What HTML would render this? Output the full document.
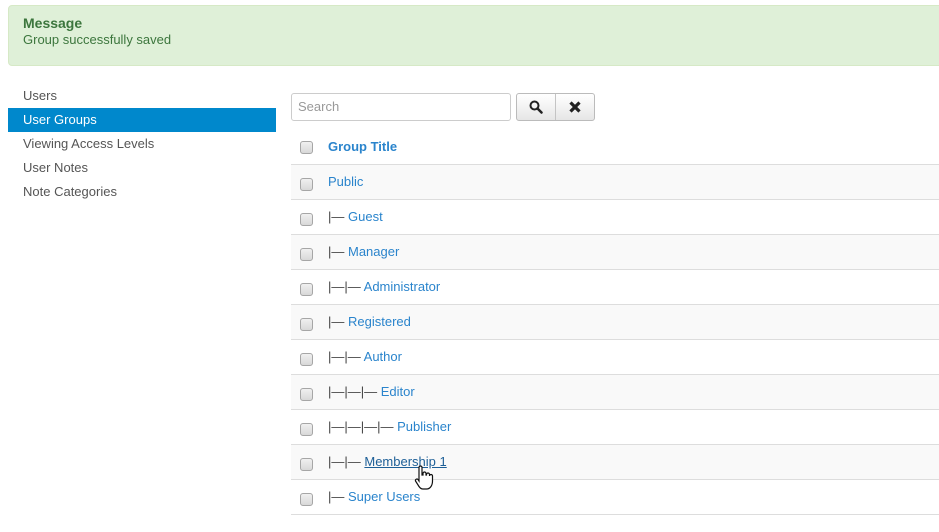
<!DOCTYPE html>
<html><head><meta charset="utf-8"><style>
*{box-sizing:border-box;margin:0;padding:0}
body{width:939px;height:532px;background:#fff;font-family:"Liberation Sans",Arial,sans-serif;font-size:13px;color:#333;position:relative;overflow:hidden}
.msg{position:absolute;left:8px;top:5px;width:940px;height:61px;background:#dff0d8;border:1px solid #d6e9c6;border-radius:4px;color:#3c763d;padding:9px 14px}
.msg b{display:block;font-size:14px;line-height:16px}
.msg span{display:block;font-size:13px;line-height:17px}
.side{position:absolute;left:8px;top:84px;width:268px}
.side div{height:24px;line-height:24px;padding-left:15px;color:#555}
.side .act{background:#0088cc;color:#fff}
.search{position:absolute;left:291px;top:93px;width:220px;height:28px;border:1px solid #ccc;border-radius:3px;padding-left:6px;line-height:26px;color:#999}
.btns{position:absolute;left:516px;top:93px;width:79px;height:28px;border:1px solid #bbb;border-radius:3px;background:linear-gradient(#fff,#e6e6e6);display:flex}
.btns div{flex:1;display:flex;align-items:center;justify-content:center}
.btns div:first-child{border-right:1px solid #c4c4c4}
.tbl{position:absolute;left:291px;top:129px;width:648px}
.row{height:35px;border-bottom:1px solid #ddd;position:relative;line-height:35px}
.row:nth-child(even){background:#f9f9f9}
.cb{position:absolute;left:9px;top:13px;width:13px;height:13px;border:1px solid #a6a6a6;border-radius:3px;background:linear-gradient(#f0f0f0,#d8d8d8)}
.t{position:absolute;left:37px;top:-1px;color:#2a84cc;font-size:13px}
.h{height:36px}
.h .t{font-weight:bold;font-size:13px;top:0}
.h .cb{top:12px}
.d{color:#444}
.u{color:#1d5f97;text-decoration:underline}
</style></head><body>
<div class="msg"><b>Message</b><span>Group successfully saved</span></div>
<div class="side">
<div>Users</div><div class="act">User Groups</div><div>Viewing Access Levels</div><div>User Notes</div><div>Note Categories</div>
</div>
<div class="search">Search</div>
<div class="btns"><div><svg width="14" height="14" viewBox="0 0 14 14"><circle cx="5.5" cy="5.5" r="4" fill="none" stroke="#222" stroke-width="2"/><path d="M8.5 8.5L12.5 12.5" stroke="#222" stroke-width="2.5" stroke-linecap="round"/></svg></div><div><svg width="14" height="14" viewBox="0 0 14 14"><path d="M2.5 2.5L11.5 11.5M11.5 2.5L2.5 11.5" stroke="#222" stroke-width="3.2"/></svg></div></div>
<div class="tbl">
<div class="row h"><div class="cb"></div><div class="t">Group Title</div></div>
<div class="row"><div class="cb"></div><div class="t">Public</div></div>
<div class="row"><div class="cb"></div><div class="t"><span class="d">|— </span>Guest</div></div>
<div class="row"><div class="cb"></div><div class="t"><span class="d">|— </span>Manager</div></div>
<div class="row"><div class="cb"></div><div class="t"><span class="d">|—|— </span>Administrator</div></div>
<div class="row"><div class="cb"></div><div class="t"><span class="d">|— </span>Registered</div></div>
<div class="row"><div class="cb"></div><div class="t"><span class="d">|—|— </span>Author</div></div>
<div class="row"><div class="cb"></div><div class="t"><span class="d">|—|—|— </span>Editor</div></div>
<div class="row"><div class="cb"></div><div class="t"><span class="d">|—|—|—|— </span>Publisher</div></div>
<div class="row"><div class="cb"></div><div class="t"><span class="d">|—|— </span><span class="u">Membership 1</span></div></div>
<div class="row"><div class="cb"></div><div class="t"><span class="d">|— </span>Super Users</div></div>
</div>
<svg style="position:absolute;left:414px;top:465px" width="20" height="26" viewBox="0 0 20 26"><path d="M5 2.5a1.5 1.5 0 0 1 3 0V10h1V8.5a1.5 1.5 0 0 1 3 0V10h.5V9.5a1.5 1.5 0 0 1 3 0V11a1.5 1.5 0 0 1 3 0v5c0 4-2 8-6 8H9c-2 0-3-1-4-2.5L1.5 16a1.5 1.5 0 0 1 2.5-1.5L5 16z" fill="#fff" stroke="#111" stroke-width="1.2"/></svg>
</body></html>
